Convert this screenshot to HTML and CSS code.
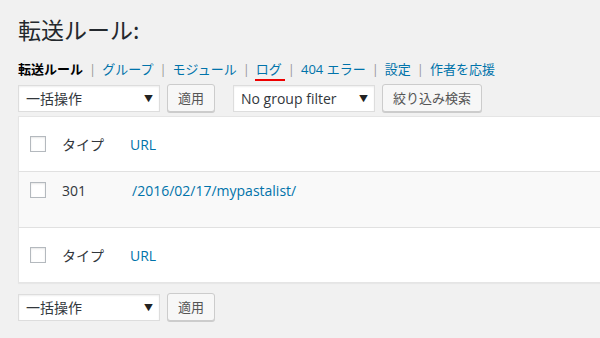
FILE: index.html
```html
<!DOCTYPE html>
<html lang="ja">
<head>
<meta charset="utf-8">
<link rel="stylesheet" href="styles.css">
</head>
<body>
<div class="wrap">
  <h1 class="title">転送ルール:</h1>
  <ul class="subsubsub">
    <li><span class="current">転送ルール</span><span class="sep">|</span></li>
    <li><a href="#">グループ</a><span class="sep">|</span></li>
    <li><a href="#">モジュール</a><span class="sep">|</span></li>
    <li><a href="#" class="marked">ログ</a><span class="sep">|</span></li>
    <li><a href="#">404 エラー</a><span class="sep">|</span></li>
    <li><a href="#">設定</a><span class="sep">|</span></li>
    <li><a href="#">作者を応援</a></li>
  </ul>
  <div class="tablenav">
    <div class="select w142"><span>一括操作</span><span class="arrow">▼</span></div>
    <button class="btn">適用</button>
    <div class="select w142 ml18"><span class="latin">No group filter</span><span class="arrow">▼</span></div>
    <button class="btn">絞り込み検索</button>
  </div>
  <div class="table">
    <div class="row head">
      <span class="cb"></span><span class="col-type">タイプ</span><a href="#" class="col-url latin">URL</a>
    </div>
    <div class="row data">
      <span class="cb"></span><span class="col-type latin">301</span><a href="#" class="col-url latin url2">/2016/02/17/mypastalist/</a>
    </div>
    <div class="row foot">
      <span class="cb"></span><span class="col-type">タイプ</span><a href="#" class="col-url latin">URL</a>
    </div>
  </div>
  <div class="tablenav bottom">
    <div class="select w142"><span>一括操作</span><span class="arrow">▼</span></div>
    <button class="btn">適用</button>
  </div>
</div>
</body>
</html>
```
FILE: styles.css
```css
* { box-sizing: border-box; }
html, body { margin: 0; padding: 0; }
body {
  background: #f1f1f1;
  color: #444;
  font-family: "Open Sans", "Noto Sans CJK JP", sans-serif;
  font-size: 13px;
  width: 600px;
  height: 338px;
  overflow: hidden;
}
.wrap { padding-left: 18px; }
.title {
  margin: 0;
  padding: 15px 0 0;
  font-size: 23px;
  line-height: 29px;
  font-weight: 400;
  color: #23282d;
  font-family: "Noto Sans CJK JP", sans-serif;
}
.subsubsub {
  list-style: none;
  margin: 16px 0 0;
  padding: 0;
  display: flex;
  font-size: 13px;
  line-height: 18px;
  height: 18px;
}
.subsubsub li { display: flex; }
.subsubsub a { color: #0073aa; text-decoration: none; }
.current { color: #000; font-weight: 700; }
.sep { color: #999; padding: 0 6px; }
.marked { position: relative; }
.marked::after {
  content: "";
  position: absolute;
  left: -1px; right: -3px;
  bottom: -3px;
  height: 2px;
  background: #e00;
}
.tablenav {
  display: flex;
  align-items: center;
  height: 28px;
  margin-top: 6px;
}
.select {
  height: 27px;
  background: #fff;
  border: 1px solid #ddd;
  box-shadow: inset 0 1px 2px rgba(0,0,0,.07);
  display: flex;
  align-items: center;
  justify-content: space-between;
  padding: 0 6px 0 7px;
  font-size: 14px;
  color: #32373c;
}
.w142 { width: 142px; }
.ml18 { margin-left: 18px; }
.arrow { font-size: 9px; color: #222; }
.btn {
  margin-left: 7px;
  height: 28px;
  padding: 0 10px;
  background: #f7f7f7;
  border: 1px solid #ccc;
  border-radius: 3px;
  box-shadow: 0 1px 0 #ccc;
  color: #555;
  font-family: "Noto Sans CJK JP", sans-serif;
  font-size: 13px;
  line-height: 26px;
}
.table {
  margin-top: 4px;
  width: 600px;
  background: #fff;
  border: 1px solid #e5e5e5;
  border-right: none;
  box-shadow: 0 1px 1px rgba(0,0,0,.04);
}
.row {
  display: flex;
  align-items: center;
  height: 56px;
}
.row.head { border-bottom: 1px solid #e1e1e1; height: 55px; }
.row.data { background: #f9f9f9; border-bottom: 1px solid #e1e1e1; align-items: flex-start; padding-top: 9px; }
.row.foot { height: 54px; }
.cb {
  width: 16px; height: 16px;
  border: 1px solid #b4b9be;
  background: #fff;
  margin-left: 11px;
  box-shadow: inset 0 1px 2px rgba(0,0,0,.1);
  flex: none;
}
.col-type { margin-left: 16px; width: 68px; color: #32373c; font-size: 14px; }
.col-url { color: #0073aa; text-decoration: none; font-size: 14px; }
.url2 { margin-left: 2px; }
.data .cb { margin-top: 1px; }
.tablenav.bottom { margin-top: 10px; }
```
